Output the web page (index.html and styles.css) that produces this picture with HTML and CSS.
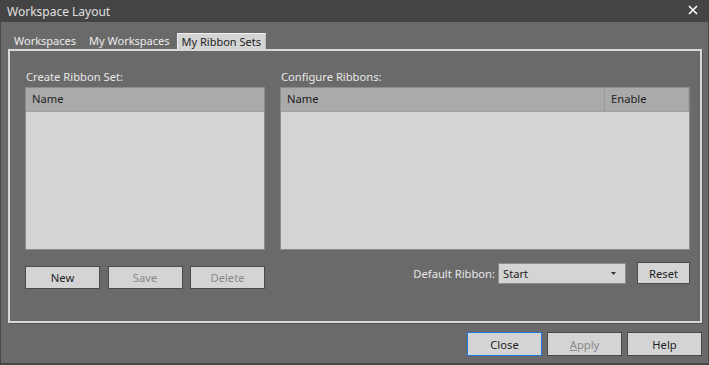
FILE: index.html
```html
<!DOCTYPE html>
<html lang="en">
  <head>
    <meta charset="UTF-8" />
    <title>Workspace Layout</title>
    <link rel="stylesheet" href="styles.css">
  </head>
  <body>
    <div class="window">
      <!-- Title bar -->
      <div class="titlebar">
        <span class="title">Workspace Layout</span>
        <svg class="close-x" width="10" height="10" viewBox="0 0 10 10">
          <path d="M1 1 L9 9 M9 1 L1 9" stroke="#fff" stroke-width="1.6" />
        </svg>
      </div>

      <!-- Tabs -->
      <div class="tabs">
        <div class="tab">Workspaces</div>
        <div class="tab">My Workspaces</div>
        <div class="tab active">My Ribbon Sets</div>
      </div>

      <!-- Tab page -->
      <div class="frame">
        <div class="columns">
          <div class="col col-left">
            <div class="label">Create Ribbon Set:</div>
            <div class="list">
              <div class="list-head">
                <div class="cell">Name</div>
              </div>
            </div>
            <div class="btn-row">
              <button class="btn">New</button>
              <button class="btn disabled">Save</button>
              <button class="btn disabled">Delete</button>
            </div>
          </div>

          <div class="col col-right">
            <div class="label">Configure Ribbons:</div>
            <div class="list">
              <div class="list-head">
                <div class="cell grow">Name</div>
                <div class="cell enable">Enable</div>
              </div>
            </div>
            <div class="ribbon-row">
              <span class="ribbon-label">Default Ribbon:</span>
              <div class="select">
                <span>Start</span>
                <svg width="5" height="3" viewBox="0 0 5 3"><path d="M0 0 H5 L2.5 3 Z" fill="#333" /></svg>
              </div>
              <button class="btn reset">Reset</button>
            </div>
          </div>
        </div>
      </div>

      <!-- Dialog buttons -->
      <div class="footer">
        <button class="btn foot default">Close</button>
        <button class="btn foot disabled"><u>A</u>pply</button>
        <button class="btn foot">Help</button>
      </div>
    </div>
  </body>
</html>
```

FILE: styles.css
```css
/* Dialog base */
body {
  margin: 0;
  background: #6a6a6a;
  font-family: "Noto Sans", "DejaVu Sans", sans-serif;
  font-size: 11px;
  color: #e6e6e6;
}

.window {
  width: 709px;
  height: 365px;
  box-sizing: border-box;
  background: #6a6a6a;
  border-left: 1px solid #474747;
  border-right: 1px solid #474747;
  border-bottom: 2px solid #474747;
  display: flex;
  flex-direction: column;
}

/* Title bar */
.titlebar {
  height: 22px;
  flex: none;
  background: #444444;
  display: flex;
  align-items: center;
  justify-content: space-between;
  padding: 0 11px 0 7px;
  margin: 0 -1px;
  font-size: 12px;
  color: #e0e0e0;
}

.close-x {
  margin-top: -2px;
}

/* Tabs */
.tabs {
  display: flex;
  align-items: flex-end;
  height: 16px;
  margin-top: 11px;
  padding-left: 7px;
}

.tab {
  padding: 0 6px;
  height: 16px;
  line-height: 16px;
  color: #ececec;
  font-size: 11px;
}

.tab:first-child {
  padding-right: 7px;
}

.tab.active {
  background: #d4d4d4;
  color: #222;
  border: 1px solid #f0f0f0;
  border-right-color: #bdbdbd;
  border-bottom: none;
  line-height: 15px;
  box-sizing: border-box;
  padding: 0 4px;
  height: 17px;
  margin-left: 1px;
  margin-bottom: -1px;
}

.frame {
  margin: 0 6px 0 7px;
  height: 274px;
  box-sizing: border-box;
  border: 2px solid #d8d8d8;
  box-shadow: 1px 1px 0 #555;
  padding: 0 8px 0 15px;
}

.columns {
  display: flex;
  gap: 15px;
}

.col {
  display: flex;
  flex-direction: column;
}

.col-left {
  width: 240px;
}

.col-right {
  width: 410px;
}

.label {
  height: 36px;
  line-height: 16px;
  padding-top: 18px;
  box-sizing: border-box;
  font-size: 11.2px;
  color: #e8e8e8;
  padding-left: 1px;
}

/* List views */
.list {
  height: 163px;
  box-sizing: border-box;
  background: #d4d4d4;
  border: 1px solid #8c8c8c;
}

.list-head {
  display: flex;
  height: 23px;
  background: #aaaaaa;
  border-bottom: 1px solid #a2a2a2;
}

.cell {
  padding-left: 6px;
  line-height: 22px;
  color: #222;
  font-size: 11.2px;
}

.cell.grow {
  flex: 1;
  border-right: 1px solid #9a9a9a;
}

.cell.enable {
  width: 77px;
  border-right: 1px solid #9a9a9a;
}

/* Buttons */
.btn {
  font-family: inherit;
  font-size: 11.2px;
  background: #d4d4d4;
  color: #1e1e1e;
  border: 1px solid #4a4a4a;
  height: 23px;
  width: 75px;
  padding: 0;
  margin: 0;
  box-sizing: border-box;
}

.btn.disabled {
  color: #8a8a8a;
}

.btn-row {
  display: flex;
  gap: 7.5px;
  margin-top: 16px;
}

.ribbon-row {
  display: flex;
  align-items: center;
  justify-content: flex-end;
  margin-top: 12px;
}

.ribbon-label {
  color: #e8e8e8;
  font-size: 11.2px;
  margin-right: 3px;
}

.select {
  width: 128px;
  height: 21px;
  box-sizing: border-box;
  background: #d4d4d4;
  border: 1px solid #8c8c8c;
  display: flex;
  align-items: center;
  justify-content: space-between;
  padding: 0 9px 0 4px;
  color: #1e1e1e;
  font-size: 11.2px;
}

.btn.reset {
  width: 53px;
  height: 22px;
  margin-left: 11px;
}

/* Footer */
.footer {
  display: flex;
  justify-content: flex-end;
  gap: 5px;
  padding-right: 6px;
  margin-top: 9px;
}

.btn.foot {
  width: 75px;
  height: 24px;
}

.btn.foot.default {
  border-color: #1e78d7;
  box-shadow: inset 0 0 0 1px #d4d4d4;
}
```
